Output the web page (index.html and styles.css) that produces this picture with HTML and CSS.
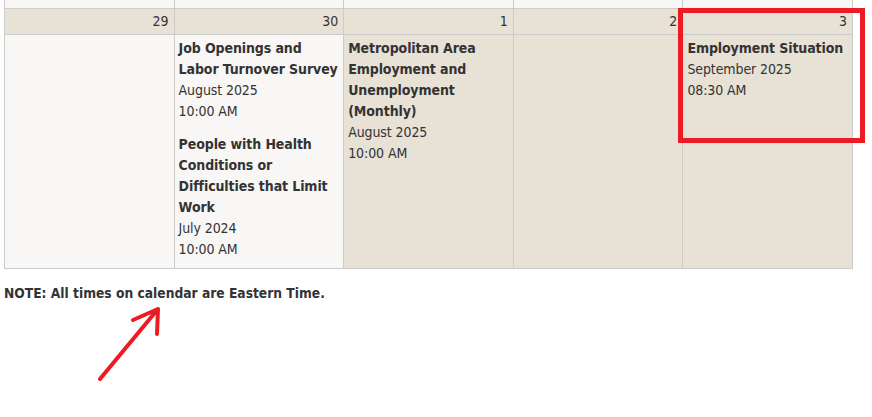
FILE: index.html
```html
<!DOCTYPE html>
<html>
<head>
<meta charset="utf-8">
<link rel="stylesheet" href="styles.css">
</head>
<body>
<div class="page">
  <table class="cal">
    <tr class="prev">
      <td class="light"></td><td class="light"></td><td class="light"></td><td class="light"></td><td class="light"></td>
    </tr>
    <tr class="days">
      <td>29</td><td>30</td><td>1</td><td>2</td><td>3</td>
    </tr>
    <tr class="events">
      <td class="light"></td>
      <td class="light">
        <div class="event">
          <div class="title">Job Openings and Labor Turnover Survey</div>
          <div>August 2025</div>
          <div>10:00 AM</div>
        </div>
        <div class="event">
          <div class="title">People with Health Conditions or Difficulties that Limit Work</div>
          <div>July 2024</div>
          <div>10:00 AM</div>
        </div>
      </td>
      <td>
        <div class="event">
          <div class="title">Metropolitan Area Employment and Unemployment (Monthly)</div>
          <div>August 2025</div>
          <div>10:00 AM</div>
        </div>
      </td>
      <td></td>
      <td>
        <div class="event">
          <div class="title">Employment Situation</div>
          <div>September 2025</div>
          <div>08:30 AM</div>
        </div>
      </td>
    </tr>
  </table>
  <p class="note">NOTE: All times on calendar are Eastern Time.</p>
  <div class="highlight"></div>
  <svg class="arrow" width="80" height="90" viewBox="0 0 80 90">
    <path d="M2 74 L60 4 M35 15 L60 4 L59 29" fill="none" stroke="#ed1c24" stroke-width="4" stroke-linecap="round" stroke-linejoin="round"/>
  </svg>
</div>
</body>
</html>
```
FILE: styles.css
```css
html, body {
  margin: 0;
  padding: 0;
  background: #fff;
}
.page {
  position: relative;
  width: 872px;
  height: 417px;
  padding-left: 4px;
  box-sizing: border-box;
  font-family: "DejaVu Sans Condensed", "DejaVu Sans", sans-serif;
  font-stretch: condensed;
  font-size: 14px;
  color: #333;
}
.cal {
  border-collapse: collapse;
  table-layout: fixed;
  width: 849px;
  margin-top: -1px;
}
.cal td {
  border: 1px solid #cccccc;
  background: #e8e1d6;
  vertical-align: top;
  padding: 0 5px;
}
.cal td.light {
  background: #f8f7f5;
}
.prev td {
  height: 8px;
  padding: 0;
}
.days td {
  text-align: right;
  height: 25px;
  line-height: 25px;
  padding: 0 5px 0 5px;
  vertical-align: middle;
}
.events td {
  padding: 3px 0 8px 4px;
  line-height: 21px;
}
.event {
  letter-spacing: -0.1px;
}
.event + .event {
  margin-top: 12px;
}
.title {
  font-weight: bold;
}
.note {
  margin: 15px 0 0 0;
  font-weight: bold;
  font-size: 13.7px;
  line-height: 18px;
}
.highlight {
  position: absolute;
  left: 678px;
  top: 9px;
  width: 177px;
  height: 125px;
  border: 5px solid #ed1c24;
}
.arrow {
  position: absolute;
  left: 98px;
  top: 306px;
}
```
